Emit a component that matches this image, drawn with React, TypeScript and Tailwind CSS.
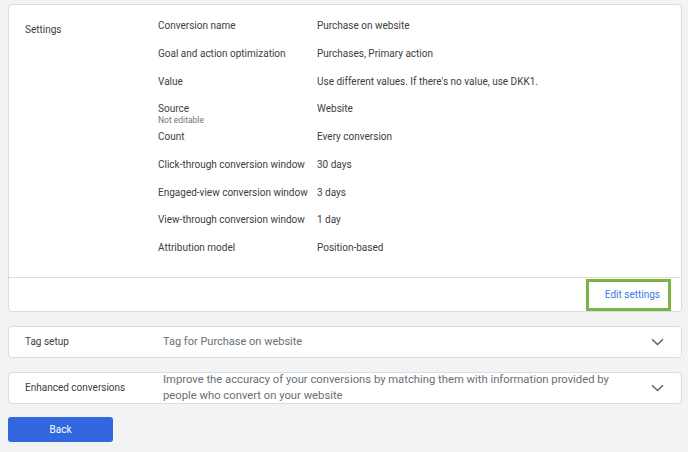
const rows: { label: string; sub?: string; value: string }[] = [
  { label: "Conversion name", value: "Purchase on website" },
  { label: "Goal and action optimization", value: "Purchases, Primary action" },
  { label: "Value", value: "Use different values. If there's no value, use DKK1." },
  { label: "Source", sub: "Not editable", value: "Website" },
  { label: "Count", value: "Every conversion" },
  { label: "Click-through conversion window", value: "30 days" },
  { label: "Engaged-view conversion window", value: "3 days" },
  { label: "View-through conversion window", value: "1 day" },
  { label: "Attribution model", value: "Position-based" },
]

function Chevron() {
  return (
    <svg width="13" height="8" viewBox="0 0 13 8" fill="none">
      <path d="M1 1.2 L6.5 6.5 L12 1.2" stroke="#5f6368" strokeWidth="1.5" />
    </svg>
  )
}

export default function App() {
  return (
    <div
      className="min-h-[452px] w-[688px] bg-[#f1f3f4] pl-2 pr-[6px] pt-1 text-[10px] text-[#3c4043]"
      style={{ fontFamily: "Roboto, 'Liberation Sans', sans-serif" }}
    >
      <div className="rounded-[4px] border border-[#dadce0] bg-white">
        <div className="flex">
          <div className="w-[149px] shrink-0 pl-4 pt-[18px] leading-[14px]">Settings</div>
          <div className="flex flex-col pt-[14px] pb-[8px]">
            {rows.map((r) => (
              <div key={r.label} className="flex h-[27.75px] whitespace-nowrap leading-[14px]">
                <div className="w-[159px] shrink-0">
                  <div>{r.label}</div>
                  {r.sub && <div className="text-[8.5px] leading-[8px] text-[#70757a]">{r.sub}</div>}
                </div>
                <div>{r.value}</div>
              </div>
            ))}
          </div>
        </div>
        <div className="flex justify-end border-t border-[#dadce0] pt-[1px] pr-[10px]">
          <div className="flex h-[32px] w-[85px] items-center justify-end border-[3px] border-[#7cb342] pr-[8px] text-[#3b78e7]">
            Edit settings
          </div>
        </div>
      </div>

      <div className="mt-[14px] flex h-[32px] items-center rounded-[4px] border border-[#dadce0] bg-white">
        <div className="w-[154px] shrink-0 pl-4">Tag setup</div>
        <div className="flex-1 text-[11px] text-[#6b6f73]">Tag for Purchase on website</div>
        <div className="pr-[17px]">
          <Chevron />
        </div>
      </div>

      <div className="mt-[14px] flex h-[32px] items-center rounded-[4px] border border-[#dadce0] bg-white">
        <div className="w-[154px] shrink-0 pl-4">Enhanced conversions</div>
        <div className="flex-1">
          <div className="w-[460px] text-[11.25px] leading-[16px] text-[#6b6f73]">
            Improve the accuracy of your conversions by matching them with information provided by people who
            convert on your website
          </div>
        </div>
        <div className="pr-[17px]">
          <Chevron />
        </div>
      </div>

      <button className="mt-[13px] flex h-[25px] w-[105px] items-center justify-center rounded-[3px] bg-[#3367e0] text-white">
        Back
      </button>
    </div>
  )
}
